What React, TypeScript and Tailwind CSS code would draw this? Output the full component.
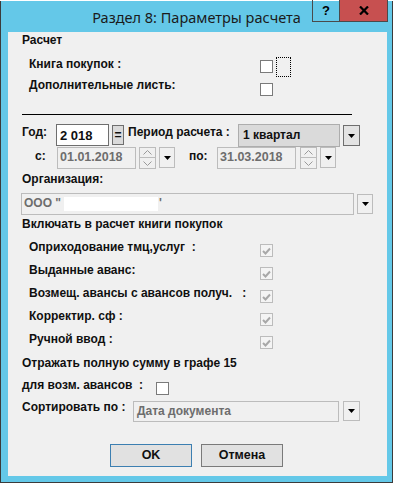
const ui = "font-['Liberation_Sans',Arial,sans-serif] font-bold text-[12px] leading-[13px] text-[#101010]";

function Arrow() {
  return (
    <svg width="7" height="4" viewBox="0 0 7 4">
      <polygon points="0,0 7,0 3.5,4" fill="#000" />
    </svg>
  );
}

function DropBtn({ strong, h = "h-[21px]", w = "w-[17px]", cls = "" }: { strong?: boolean; h?: string; w?: string; cls?: string }) {
  return (
    <div
      className={`${h} ${w} ${cls} flex items-center justify-center border ${
        strong ? "border-[#6e6e6e] bg-[#e3e3e3]" : "border-[#bcbcbc] bg-[#f0f0f0]"
      }`}
    >
      <Arrow />
    </div>
  );
}

function Spinner() {
  return (
    <div className="ml-[3px] w-[17px] h-[22px] flex flex-col">
      <div className="h-[11px] border border-[#bcbcbc] flex items-center justify-center">
        <svg width="9" height="5" viewBox="0 0 9 5">
          <polyline points="0.5,4.5 4.5,0.5 8.5,4.5" fill="none" stroke="#9a9a9a" strokeWidth="1" />
        </svg>
      </div>
      <div className="h-[11px] border border-t-0 border-[#bcbcbc] flex items-center justify-center">
        <svg width="9" height="5" viewBox="0 0 9 5">
          <polyline points="0.5,0.5 4.5,4.5 8.5,0.5" fill="none" stroke="#9a9a9a" strokeWidth="1" />
        </svg>
      </div>
    </div>
  );
}

function Box({ cls = "" }: { cls?: string }) {
  return <div className={`w-[13px] h-[13px] border border-[#7a7a7a] bg-white ${cls}`} />;
}

function GrayCheck({ cls = "" }: { cls?: string }) {
  return (
    <div className={`w-[13px] h-[13px] border border-[#bcbcbc] bg-[#f4f4f4] flex items-center justify-center ${cls}`}>
      <svg width="9" height="8" viewBox="0 0 9 8">
        <polyline points="1,4 3.5,6.5 8,1.5" fill="none" stroke="#a8a8a8" strokeWidth="2" />
      </svg>
    </div>
  );
}

const items = [
  "Оприходование тмц,услуг  :",
  "Выданные аванс:",
  "Возмещ. авансы с авансов получ.   :",
  "Корректир. сф :",
  "Ручной ввод :",
];

export default function App() {
  return (
    <div className="w-[395px] h-[485px] bg-white overflow-hidden">
      <div className="mt-[1px] w-[393px] h-[482px] bg-[#64c8e8] border-l border-r border-b border-[#3b3b3b] flex flex-col">
        {/* title bar */}
        <div className="h-[31px] flex items-start">
          <div className="flex-1 pl-[80px] pt-[6px] text-center font-['Noto_Sans',sans-serif] text-[14.5px] leading-[20px] text-[#1b1b1b] whitespace-nowrap">
            Раздел 8: Параметры расчета
          </div>
          <div className="mr-[4px] -mt-[1px] flex h-[22px] border border-t-0 border-[#4a4a4a]">
            <div className="w-[27px] flex items-center justify-center border-r border-[#4a4a4a] font-['Liberation_Sans',Arial,sans-serif] font-bold text-[13px] text-black">
              ?
            </div>
            <div className="w-[47px] bg-[#c75050] flex items-center justify-center">
              <svg width="10" height="9" viewBox="0 0 10 9">
                <path d="M1 0.5 L9 8.5 M9 0.5 L1 8.5" stroke="#000" strokeWidth="2.2" />
              </svg>
            </div>
          </div>
        </div>

        {/* panel */}
        <div className={`ml-[7px] w-[379px] h-[444px] bg-[#f0f0f0] flex flex-col pt-[2px] ${ui}`}>
          <div className="pl-[14px] h-[13px]">Расчет</div>

          <div className="mt-[10px] h-[20px] flex items-start pl-[21px]">
            <span className="mt-[1px] w-[231px]">Книга покупок :</span>
            <Box cls="mt-[3px]" />
            <div className="ml-[3px] w-[15px] h-[20px] border border-dotted border-black" />
          </div>

          <div className="mt-[1px] h-[18px] flex items-start pl-[21px]">
            <span className="mt-[1px] w-[231px]">Дополнительные листь:</span>
            <Box cls="mt-[5px]" />
          </div>

          <div className="mt-[18px] ml-[14px] w-[330px] h-[1px] bg-black" />

          {/* year row */}
          <div className="mt-[9px] h-[23px] flex items-start pl-[14px]">
            <span className="mt-[2px] w-[34px]">Год:</span>
            <div className="w-[53px] h-[22px] border border-[#6e6e6e] bg-white pl-[3px] pt-[3px] text-[13px] leading-[15px]">
              2 018
            </div>
            <div className="ml-[3px] mt-[1px] w-[12px] h-[20px] border border-[#6e6e6e] bg-[#dadada] flex items-center justify-center text-[12px] leading-[12px]">
              =
            </div>
            <span className="ml-[4px] mt-[2px] w-[110px]">Период расчета :</span>
            <div className="w-[102px] h-[23px] border border-[#adadad] bg-[#dadada] pl-[4px] pt-[4px]">1 квартал</div>
            <DropBtn strong cls="ml-[3px] mt-[1px]" />
          </div>

          {/* dates row */}
          <div className="h-[22px] flex items-start pl-[27px]">
            <span className="mt-[3px] w-[22px]">с:</span>
            <div className="w-[79px] h-[22px] border border-[#bcbcbc] pl-[2px] pt-[2px] text-[#6d6d6d] text-[12.5px] leading-[15px]">
              01.01.2018
            </div>
            <Spinner />
            <DropBtn h="h-[21px]" w="w-[16px]" cls="ml-[3px]" />
            <span className="ml-[14px] mt-[3px] w-[28px]">по:</span>
            <div className="w-[79px] h-[22px] border border-[#bcbcbc] pl-[2px] pt-[2px] text-[#6d6d6d] text-[12.5px] leading-[15px]">
              31.03.2018
            </div>
            <div className="ml-[1px]">
              <Spinner />
            </div>
            <DropBtn h="h-[21px]" w="w-[16px]" cls="ml-[3px]" />
          </div>

          <div className="mt-[4px] h-[13px] pl-[14px]">Организация:</div>

          <div className="mt-[7px] h-[22px] flex items-start pl-[13px]">
            <div className="w-[333px] h-[22px] border border-[#bcbcbc] pl-[2px] pt-[2px] text-[#6d6d6d] text-[12px] leading-[15px] flex items-start whitespace-pre">
              <span>ООО "</span>
              <span className="mt-[1px] ml-[3px] w-[94px] h-[14px] bg-white" />
              <span className="ml-[1px]">'</span>
            </div>
            <DropBtn h="h-[20px]" w="w-[16px]" cls="ml-[3px] mt-[1px]" />
          </div>

          <div className="mt-[3px] h-[13px] pl-[14px]">Включать в расчет книги покупок</div>

          <div className="mt-[10px] flex flex-col gap-[7px]">
            {items.map((t) => (
              <div key={t} className="h-[16px] flex items-start pl-[21px]">
                <span className="w-[231px] whitespace-pre">{t}</span>
                <GrayCheck cls="mt-[3px]" />
              </div>
            ))}
          </div>

          <div className="mt-[8px] h-[13px] pl-[14px]">Отражать полную сумму в графе 15</div>

          <div className="mt-[9px] h-[16px] flex items-start pl-[14px]">
            <span className="w-[134px] whitespace-pre">для возм. авансов  :</span>
            <Box cls="mt-[3px]" />
          </div>

          <div className="mt-[6px] h-[21px] flex items-start pl-[14px]">
            <span className="w-[111px]">Сортировать по :</span>
            <div className="w-[206px] h-[21px] border border-[#bcbcbc] pl-[3px] pt-[2px] text-[#6d6d6d] text-[12px] leading-[15px]">
              Дата документа
            </div>
            <DropBtn h="h-[20px]" w="w-[17px]" cls="ml-[4px]" />
          </div>

          <div className="mt-[22px] flex pl-[102px] gap-[9px]">
            <div className="w-[82px] h-[23px] border border-[#3c7fb1] bg-[#e1e1e1] flex items-center justify-center text-[12.5px]">
              OK
            </div>
            <div className="w-[82px] h-[23px] border border-[#7a7a7a] bg-[#e1e1e1] flex items-center justify-center text-[12.5px]">
              Отмена
            </div>
          </div>
        </div>
      </div>
    </div>
  );
}
